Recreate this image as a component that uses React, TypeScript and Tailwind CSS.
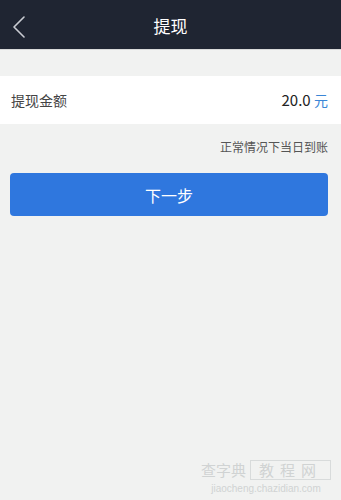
const FONT = { fontFamily: '"Noto Sans CJK SC", "Noto Sans", sans-serif' } as const;

export default function App() {
  return (
    <div className="relative min-h-[500px] bg-[#f1f2f1]" style={FONT}>
      {/* Top bar */}
      <div className="flex h-[50px] items-center bg-[#1f2532] px-3 border-b border-[#d8dad9]">
        <button type="button" aria-label="Back" className="flex w-8 items-center pt-[4px]">
          <svg width="14" height="22" viewBox="0 0 14 22" fill="none">
            <path d="M12 1 L2 11 L12 21" stroke="#c9ccd2" strokeWidth="1.6" strokeLinecap="round" strokeLinejoin="round" />
          </svg>
        </button>
        <div className="flex-1 pt-[3px] text-center text-[17px] text-white">提现</div>
        <div className="w-8" />
      </div>

      {/* Amount row */}
      <div className="mt-[26px] flex h-[48px] items-center justify-between bg-white pl-[11px] pr-[13px]">
        <span className="text-[14px] text-[#444]">提现金额</span>
        <span className="text-[15px] text-[#222]">
          20.0 <span className="text-[14px] text-[#3a86d6]">元</span>
        </span>
      </div>

      <div className="mt-[14px] pr-[13px] text-right text-[12px] text-[#555]">正常情况下当日到账</div>

      <div className="mt-[17px] pl-[10px] pr-[13px]">
        <button
          type="button"
          className="flex h-[43px] w-full items-center justify-center rounded-[4px] bg-[#2f77de] text-[16px] text-white"
        >
          下一步
        </button>
      </div>

      {/* Watermark */}
      <div className="absolute bottom-[5px] right-[10px] flex flex-col items-center gap-[3px] text-[#d0d3d3]">
        <div className="flex items-center gap-1 text-[15px] leading-[18px]">
          <span>查字典</span>
          <span className="border border-[#d8dbdb] px-2 tracking-[6px]">教程网</span>
        </div>
        <div className="text-[10px] leading-[12px]" style={{ fontFamily: '"Liberation Sans", sans-serif' }}>
          jiaocheng.chazidian.com
        </div>
      </div>
    </div>
  );
}
